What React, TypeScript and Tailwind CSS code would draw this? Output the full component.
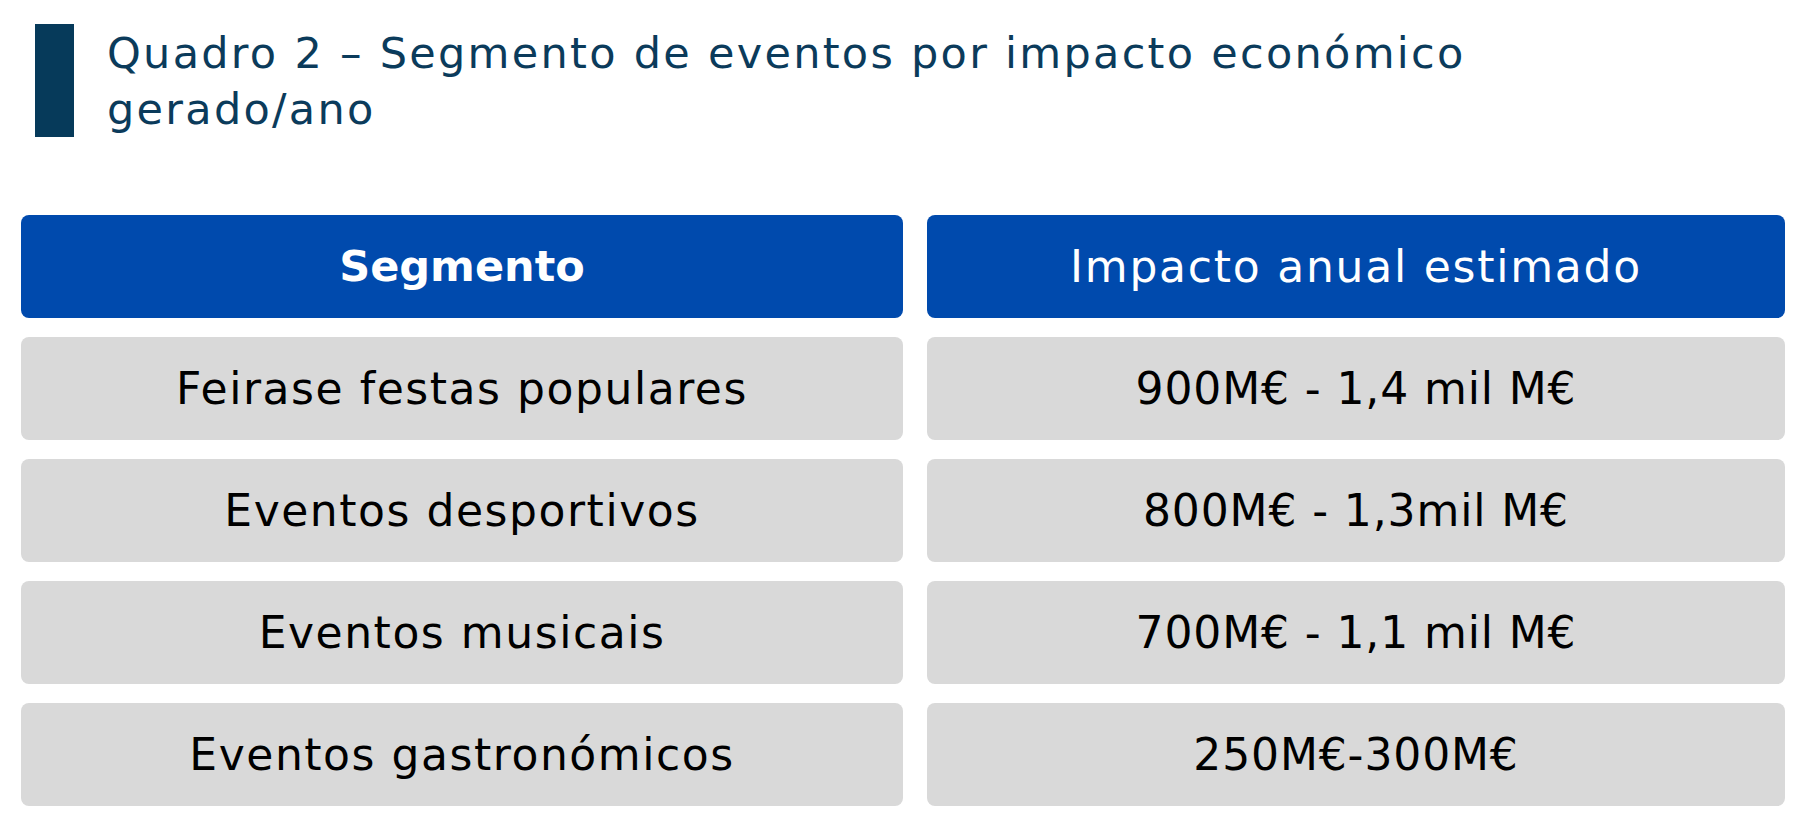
const linhas = [
  { segmento: "Feirase festas populares", impacto: "900M€ - 1,4 mil M€" },
  { segmento: "Eventos desportivos", impacto: "800M€ - 1,3mil M€" },
  { segmento: "Eventos musicais", impacto: "700M€ - 1,1 mil M€" },
  { segmento: "Eventos gastronómicos", impacto: "250M€-300M€" },
]

export default function App() {
  return (
    <div className="min-h-screen bg-white font-['DejaVu_Sans',sans-serif]">
      {/* Título */}
      <div className="flex pl-[35px] pt-[24px]">
        <span className="w-[39px] shrink-0 bg-[#063a5a]" />
        <h1 className="ml-[33px] max-w-[1500px] pt-[1px] text-[43px] leading-[56px] tracking-[0.053em] text-[#0b3b5b]">
          Quadro 2 – Segmento de eventos por impacto económico gerado/ano
        </h1>
      </div>

      {/* Quadro */}
      <div className="mt-[78px] grid grid-cols-[882px_858px] gap-x-[24px] gap-y-[19px] px-[21px]">
        <div className="flex h-[103px] items-center justify-center rounded-[8px] bg-[#004aad] text-[43px] font-bold leading-none text-white">
          Segmento
        </div>
        <div className="flex h-[103px] items-center justify-center rounded-[8px] bg-[#004aad] text-[44px] leading-none tracking-[0.04em] text-white">
          Impacto anual estimado
        </div>
        {linhas.map((l) => (
          <div key={l.segmento} className="contents">
            <div className="flex h-[103px] items-center justify-center rounded-[8px] bg-[#d9d9d9] text-[44px] leading-none tracking-[0.035em] text-black">
              {l.segmento}
            </div>
            <div className="flex h-[103px] items-center justify-center rounded-[8px] bg-[#d9d9d9] text-[44px] leading-none tracking-[0.02em] text-black">
              {l.impacto}
            </div>
          </div>
        ))}
      </div>
    </div>
  )
}
